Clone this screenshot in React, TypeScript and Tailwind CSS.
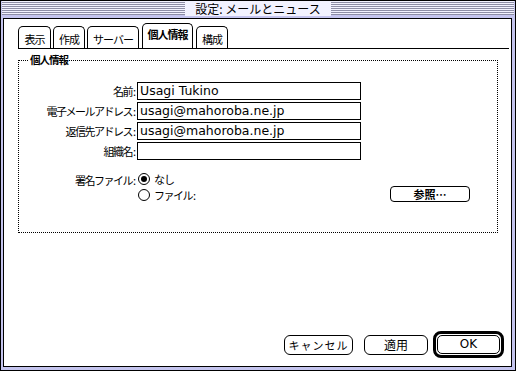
import React from "react";

const jp = "font-['Noto_Sans_CJK_JP',sans-serif]";
const latin = "font-['DejaVu_Sans','Noto_Sans_CJK_JP',sans-serif]";

const tabs = [
  { label: "表示", w: "w-[33px]" },
  { label: "作成", w: "w-[32px]" },
  { label: "サーバー", w: "w-[52px]" },
  { label: "個人情報", w: "w-[51px]", active: true },
  { label: "構成", w: "w-[32px]" },
];

const fields = [
  { label: "名前", value: "Usagi Tukino" },
  { label: "電子メールアドレス", value: "usagi@mahoroba.ne.jp" },
  { label: "返信先アドレス", value: "usagi@mahoroba.ne.jp" },
  { label: "組織名", value: "" },
];

function Stripes() {
  return (
    <div className="flex-1 h-[14px] bg-[repeating-linear-gradient(to_bottom,#f2f2ff_0px,#f2f2ff_1px,#8e8ea6_1px,#8e8ea6_2px)]" />
  );
}

function Radio({ checked }: { checked?: boolean }) {
  return (
    <span className="w-[12px] h-[12px] rounded-full border border-black bg-white flex items-center justify-center shrink-0">
      {checked && <span className="w-[6px] h-[6px] rounded-full bg-black" />}
    </span>
  );
}

function Label({ text }: { text: string }) {
  return (
    <span className="text-right text-[11px] leading-[18px] pr-[1px] whitespace-nowrap">
      <span className="tracking-[-1.5px]">{text}</span>
      <span className="pl-[1px]">:</span>
    </span>
  );
}

export default function App() {
  return (
    <div className={`w-[516px] h-[371px] border border-black bg-[#c4c4ee] flex flex-col text-black ${jp}`}>
      {/* title bar */}
      <div className="h-[17px] flex items-start px-[1px] bg-[#c4c4ee]">
        <Stripes />
        <span className="px-[10px] h-[15px] leading-[15px] text-[12px] bg-[#f2f2ff]">設定: メールとニュース</span>
        <Stripes />
      </div>

      {/* body */}
      <div className="flex-1 ml-[2px] mr-[3px] mb-[3px] border border-black bg-white flex flex-col">
        {/* tabs */}
        <div className="pt-[4px] ml-[14px] mr-[2px] flex items-end gap-[2px] border-b border-black h-[30px]">
          {tabs.map((t) =>
            t.active ? (
              <div
                key={t.label}
                className={`${t.w} h-[25px] ml-[1px] mr-[1px] border border-b-0 border-black rounded-t-[5px] bg-white flex items-start justify-center pt-[3px] text-[11px] tracking-[-1px] font-bold leading-[14px]`}
              >
                {t.label}
              </div>
            ) : (
              <div
                key={t.label}
                className={`${t.w} h-[22px] border border-b-0 border-black rounded-t-[5px] bg-white flex items-end justify-center pb-[2px] text-[11px] tracking-[-1px] leading-[14px]`}
              >
                {t.label}
              </div>
            )
          )}
        </div>

        {/* group box */}
        <div className="relative ml-[14px] w-[480px] h-[173px] mt-[11px] border border-dotted border-black">
          <span className="absolute -top-[9px] left-[10px] px-[1px] bg-white text-[10.5px] tracking-[-1px] font-bold leading-[16px]">個人情報</span>

          <div className="mt-[21px] grid grid-cols-[118px_224px] gap-y-[2px] items-center">
            {fields.map((f) => (
              <React.Fragment key={f.label}>
                <Label text={f.label} />
                <div className={`h-[18px] border border-black pl-[2px] text-[12.5px] leading-[16px] ${latin}`}>{f.value}</div>
              </React.Fragment>
            ))}
          </div>

          <div className="mt-[12px] flex">
            <span className="w-[118px] text-right text-[11px] leading-[16px] pr-[1px]">
              <span className="tracking-[-1.5px]">署名ファイル</span>
              <span className="pl-[1px]">:</span>
            </span>
            <div className="flex-1 flex flex-col gap-[1px] pl-[1px]">
              <div className="h-[14px] flex items-center gap-[4px] text-[11px] tracking-[-1px]">
                <Radio checked />
                <span>なし</span>
              </div>
              <div className="h-[16px] flex items-center gap-[4px] text-[11px] mr-[27px]">
                <Radio />
                <span>
                  <span className="tracking-[-1.5px]">ファイル</span>
                  <span className="pl-[1px]">:</span>
                </span>
                <button className="ml-auto -mt-[3px] w-[80px] h-[16px] border border-black rounded-[4px] bg-white text-[11px] font-bold leading-[14px]">
                  参照…
                </button>
              </div>
            </div>
          </div>
        </div>

        <div className="flex-1" />

        {/* buttons */}
        <div className="flex items-center justify-end pr-[7px] pb-[8px]">
          <button className="w-[69px] h-[20px] border border-black rounded-[6px] bg-white text-[11px] leading-[18px] tracking-[1px]">
            キャンセル
          </button>
          <button className="ml-[11px] w-[64px] h-[20px] border border-black rounded-[6px] bg-white text-[12px] leading-[18px]">
            適用
          </button>
          <div className="ml-[5px] w-[71px] h-[27px] border-[3px] border-black rounded-[8px] p-[1px] bg-white flex">
            <button className={`flex-1 border border-black rounded-[5px] bg-white text-[12px] leading-[15px] ${latin}`}>
              OK
            </button>
          </div>
        </div>
      </div>
    </div>
  );
}
